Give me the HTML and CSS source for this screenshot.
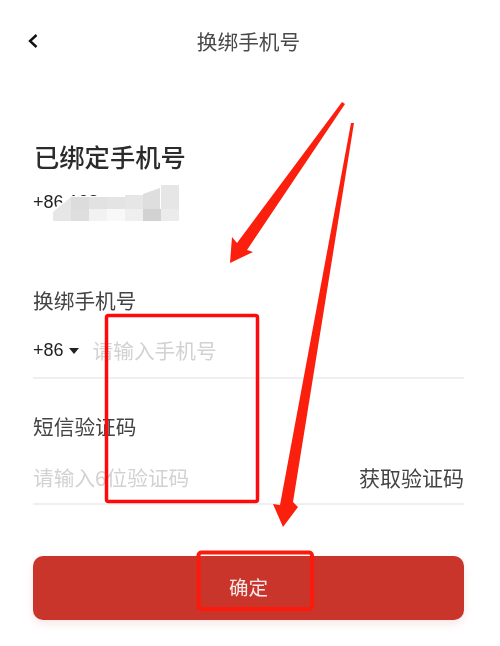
FILE: index.html
```html
<!DOCTYPE html>
<html lang="zh">
<head>
<meta charset="utf-8">
<title>换绑手机号</title>
<link rel="stylesheet" href="styles.css">
</head>
<body>
<div class="page">
  <header class="nav">
    <svg class="back" width="12" height="16" viewBox="0 0 12 16"><path d="M9.5 2 L3 8 L9.5 14" fill="none" stroke="#111" stroke-width="2.4"/></svg>
    <h1 class="nav-title">换绑手机号</h1>
  </header>
  <main class="content">
    <section class="bound">
      <h2 class="bound-title">已绑定手机号</h2>
      <p class="bound-phone">+86 138</p>
    </section>
    <section class="field first">
      <div class="label">换绑手机号</div>
      <div class="row">
        <span class="code">+86</span>
        <span class="caret"></span>
        <span class="placeholder">请输入手机号</span>
      </div>
    </section>
    <section class="field second">
      <div class="label">短信验证码</div>
      <div class="row between">
        <span class="placeholder">请输入6位验证码</span>
        <span class="get-code">获取验证码</span>
      </div>
    </section>
    <button class="submit">确定</button>
  </main>

  <svg class="mosaic" width="130" height="40" viewBox="0 0 130 40">
    <path d="M0 40 V25 L18 12 H54 L90 10 L104 1 H125 V36 H18 V40 Z" fill="#fff"/>
    <path d="M0 37 V28 L18 13 V37 Z" fill="#e6e6e6"/>
    <rect x="18" y="13" width="18" height="12" fill="#dcdcdc"/>
    <rect x="36" y="13" width="18" height="12" fill="#e2e2e2"/>
    <rect x="54" y="13" width="18" height="12" fill="#e4e4e4"/>
    <rect x="72" y="11" width="18" height="14" fill="#e6e6e6"/>
    <path d="M90 10 L107 4 V25 H90 Z" fill="#dedede"/>
    <rect x="108" y="1" width="18" height="24" fill="#e6e6e6"/>
    <rect x="18" y="25" width="18" height="12" fill="#dedede"/>
    <rect x="36" y="25" width="18" height="12" fill="#f2f2f2"/>
    <rect x="54" y="25" width="18" height="12" fill="#f8f8f8"/>
    <rect x="72" y="25" width="18" height="12" fill="#efefef"/>
    <rect x="90" y="25" width="18" height="12" fill="#d2d2d2"/>
    <rect x="108" y="25" width="18" height="12" fill="#ebebeb"/>
  </svg>

  <svg class="marks" width="500" height="646" viewBox="0 0 500 646">
    <rect x="106.5" y="315.5" width="151" height="186" rx="2" fill="none" stroke="#fe0a0a" stroke-width="3.5"/>
    <rect x="198.5" y="552.5" width="113.5" height="56.5" rx="3" fill="none" stroke="#fb1a0c" stroke-width="4"/>
    <path d="M345 104 L342 102 L237 243 L232 237 L230 263 L253 252 L247 250 Z" fill="#fb1f0e"/>
    <path d="M351 123 L354 123 L293 502 L298 507 L283 527 L273 504 L280 505 Z" fill="#fb1f0e"/>
  </svg>
</div>
</body>
</html>
```

FILE: styles.css
```css
* { box-sizing: border-box; }
html, body { margin: 0; padding: 0; background: #fff; }
.page {
  position: relative;
  width: 500px;
  height: 646px;
  overflow: hidden;
  font-family: "Noto Sans CJK SC", "Noto Sans", sans-serif;
  color: #333;
  filter: blur(0.4px);
}
.nav {
  height: 82px;
  display: flex;
  align-items: center;
  justify-content: center;
  padding-right: 3px;
  position: relative;
}
.back { position: absolute; left: 27px; top: 33px; }
.nav-title {
  margin: 0;
  font-size: 20.7px;
  font-weight: 400;
  color: #4a4a4a;
  line-height: 28px;
}
.content { padding: 0 36px 0 33px; }
.bound { padding-top: 58px; }
.bound-title {
  margin: 0;
  font-size: 25.3px;
  line-height: 32px;
  font-weight: 500;
  color: #2b2b2b;
  padding-left: 1px;
}
.bound-phone {
  margin: 17px 0 0;
  font-family: "Liberation Sans", sans-serif;
  font-size: 18px;
  line-height: 26px;
  color: #222;
}
.field { border-bottom: 2px solid #efefef; }
.field.first { margin-top: 70px; height: 94px; }
.field.second { margin-top: 32px; height: 94px; }
.label {
  font-size: 20.7px;
  line-height: 30px;
  color: #444;
}
.row {
  display: flex;
  align-items: center;
  height: 30px;
  margin-top: 20px;
}
.second .row { margin-top: 21px; }
.between { justify-content: space-between; }
.code {
  font-family: "Liberation Sans", sans-serif;
  font-size: 18px;
  color: #222;
}
.caret {
  width: 0;
  height: 0;
  margin-left: 5px;
  margin-top: 2px;
  border-left: 5.5px solid transparent;
  border-right: 5.5px solid transparent;
  border-top: 6px solid #222;
}
.placeholder {
  font-size: 20.7px;
  color: #d2d2d2;
  margin-left: 14px;
}
.between .placeholder { margin-left: 0; }
.get-code {
  font-size: 21px;
  color: #444;
}
.submit {
  display: block;
  width: 431px;
  height: 64px;
  margin-top: 51px;
  padding: 0 0 3px;
  border: 0;
  border-radius: 10px;
  background: #c9342b;
  box-shadow: 0 4px 8px rgba(201, 52, 43, 0.12);
  color: #f7e9e7;
  font: inherit;
  font-size: 19.5px;
}
.mosaic { position: absolute; left: 53px; top: 184px; }
.marks { position: absolute; left: 0; top: 0; }
```
